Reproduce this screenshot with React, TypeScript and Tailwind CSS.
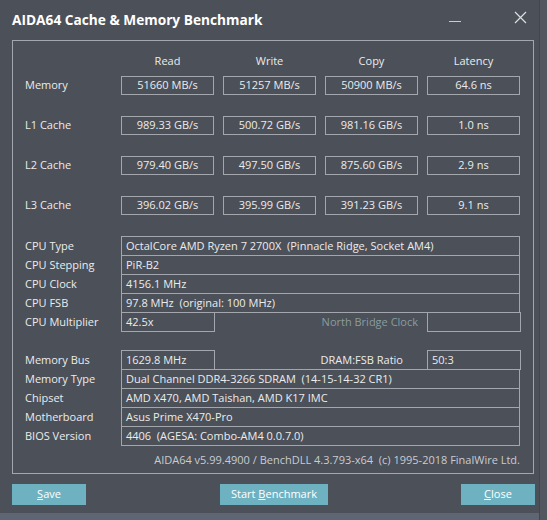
const BENCH = [
  { label: "Memory", values: ["51660 MB/s", "51257 MB/s", "50900 MB/s", "64.6 ns"] },
  { label: "L1 Cache", values: ["989.33 GB/s", "500.72 GB/s", "981.16 GB/s", "1.0 ns"] },
  { label: "L2 Cache", values: ["979.40 GB/s", "497.50 GB/s", "875.60 GB/s", "2.9 ns"] },
  { label: "L3 Cache", values: ["396.02 GB/s", "395.99 GB/s", "391.23 GB/s", "9.1 ns"] },
];

const FONT = "font-['Segoe_UI','Open_Sans','Noto_Sans',sans-serif]";

function Field({ children, className = "" }: { children?: React.ReactNode; className?: string }) {
  return (
    <div
      className={`h-[20px] border border-[#a3a7ad] flex items-center px-[4px] text-[#ececec] whitespace-pre ${className}`}
    >
      {children}
    </div>
  );
}

function InfoRow({ label, value, first }: { label: string; value: string; first?: boolean }) {
  return (
    <div className={`flex items-center ${first ? "" : "-mt-px"}`}>
      <div className="w-[96px] text-[#ececec]">{label}</div>
      <Field className="w-[399px]">{value}</Field>
    </div>
  );
}

function Button({ children, className = "" }: { children: React.ReactNode; className?: string }) {
  return (
    <div
      className={`h-[21px] bg-[#6eb2c2] text-white flex items-center justify-center text-[11px] ${className}`}
    >
      {children}
    </div>
  );
}

export default function App() {
  return (
    <div
      className={`relative w-[547px] h-[520px] overflow-hidden bg-[#4b5059] text-[11px] ${FONT}`}
    >
      {/* title bar */}
      <div className="h-[40px] flex items-center pl-[12px] pr-[20px]">
        <div className="text-white font-bold text-[13.7px]">
          AIDA64 Cache &amp; Memory Benchmark
        </div>
        <div className="ml-auto flex items-center gap-[53px] text-[#d4d6da]">
          <div className="w-[12px] h-px bg-[#c9ccd0] mt-[2px]" />
          <svg width="13" height="13" viewBox="0 0 13 13" className="-mt-[6px]">
            <path d="M1 1 L12 12 M12 1 L1 12" stroke="#dcdee2" strokeWidth="1.2" />
          </svg>
        </div>
      </div>

      {/* group box */}
      <div className="ml-[12px] w-[522px] h-[434px] border border-[#a3a7ad] pl-[12px] pt-[11px]">
        {/* benchmark grid */}
        <div className="grid grid-cols-[87px_93px_93px_93px_93px] gap-x-[9px]">
          <div />
          {["Read", "Write", "Copy", "Latency"].map((h) => (
            <div key={h} className="h-[19px] flex items-center justify-center text-[#ececec]">
              {h}
            </div>
          ))}
        </div>
        <div className="flex flex-col gap-[21px] mt-[5px]">
          {BENCH.map((row) => (
            <div
              key={row.label}
              className="grid grid-cols-[87px_93px_93px_93px_93px] gap-x-[9px] items-center"
            >
              <div className="text-[#ececec]">{row.label}</div>
              {row.values.map((v, i) => (
                <div
                  key={i}
                  className="h-[19px] border border-[#a3a7ad] flex items-center justify-center text-[#ececec]"
                >
                  {v}
                </div>
              ))}
            </div>
          ))}
        </div>

        {/* cpu info */}
        <div className="mt-[21px]">
          <InfoRow first label="CPU Type" value="OctalCore AMD Ryzen 7 2700X  (Pinnacle Ridge, Socket AM4)" />
          <InfoRow label="CPU Stepping" value="PiR-B2" />
          <InfoRow label="CPU Clock" value="4156.1 MHz" />
          <InfoRow label="CPU FSB" value="97.8 MHz  (original: 100 MHz)" />
          <div className="flex items-center -mt-px">
            <div className="w-[96px] text-[#ececec]">CPU Multiplier</div>
            <Field className="w-[94px]">42.5x</Field>
            <div className="w-[212px] text-right pr-[9px] text-[#8a9d9e]">North Bridge Clock</div>
            <Field className="w-[94px]" />
          </div>
        </div>

        {/* memory info */}
        <div className="mt-[18px]">
          <div className="flex items-center">
            <div className="w-[96px] text-[#ececec]">Memory Bus</div>
            <Field className="w-[94px]">1629.8 MHz</Field>
            <div className="w-[212px] text-right pr-[24px] text-[#ececec]">DRAM:FSB Ratio</div>
            <Field className="w-[94px]">50:3</Field>
          </div>
          <InfoRow label="Memory Type" value="Dual Channel DDR4-3266 SDRAM  (14-15-14-32 CR1)" />
          <InfoRow label="Chipset" value="AMD X470, AMD Taishan, AMD K17 IMC" />
          <InfoRow label="Motherboard" value="Asus Prime X470-Pro" />
          <InfoRow label="BIOS Version" value="4406  (AGESA: Combo-AM4 0.0.7.0)" />
        </div>

        <div className="mt-[6px] w-[495px] text-right text-[#c9ccd1] whitespace-pre">
          AIDA64 v5.99.4900 / BenchDLL 4.3.793-x64  (c) 1995-2018 FinalWire Ltd.
        </div>
      </div>

      {/* buttons */}
      <div className="flex items-center mt-[10px] pl-[12px] w-[535px]">
        <Button className="w-[74px]">
          <span><span className="underline">S</span>ave</span>
        </Button>
        <Button className="w-[108px] ml-[134px]">
          <span>Start <span className="underline">B</span>enchmark</span>
        </Button>
        <Button className="w-[74px] ml-auto">
          <span><span className="underline">C</span>lose</span>
        </Button>
      </div>

      {/* window edges */}
      <div className="absolute left-0 right-0 bottom-0 h-[7px] bg-[#5d6672]" />
      <div className="absolute top-0 bottom-0 right-0 w-[8px] bg-[#525760] border-l border-[#43474e]" />
    </div>
  );
}
